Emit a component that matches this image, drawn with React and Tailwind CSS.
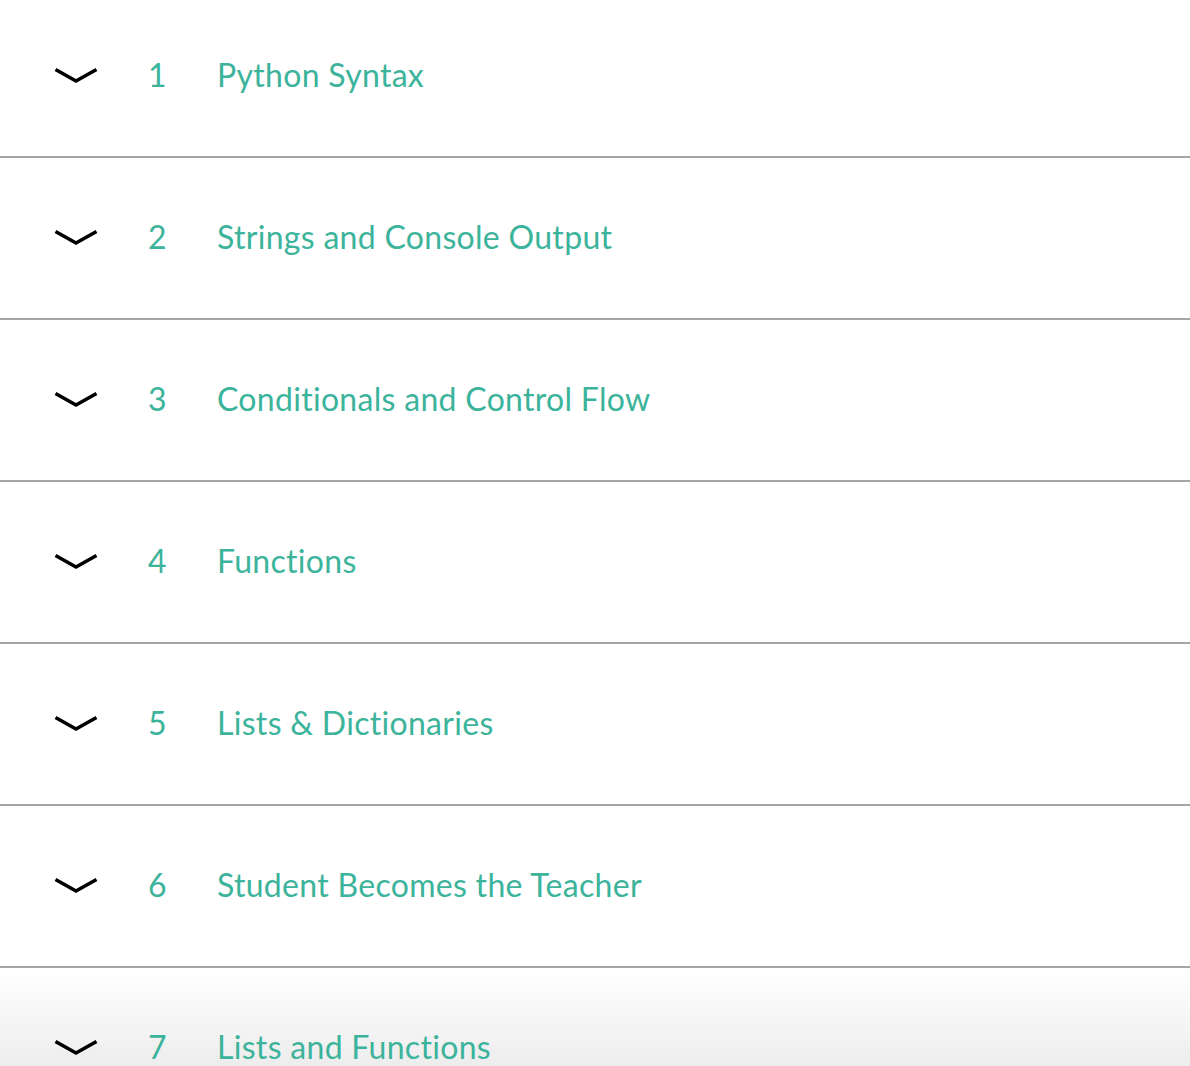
const lessons = [
  "Python Syntax",
  "Strings and Console Output",
  "Conditionals and Control Flow",
  "Functions",
  "Lists & Dictionaries",
  "Student Becomes the Teacher",
  "Lists and Functions",
]

function Chevron() {
  return (
    <svg width="44" height="18" viewBox="0 0 44 18" className="shrink-0">
      <path d="M1.5 2.5 L22 14 L42.5 2.5" fill="none" stroke="#000" strokeWidth="3.6" />
    </svg>
  )
}

export default function App() {
  return (
    <div className="h-[1066px] overflow-hidden bg-white font-['Lato',_'Open_Sans',_sans-serif] [font-variant-ligatures:none]">
      <ul className="-mt-[4px]">
        {lessons.map((title, i) => {
          const last = i === lessons.length - 1
          return (
            <li
              key={title}
              className={
                last
                  ? "flex h-[160px] items-center bg-[linear-gradient(to_bottom,#ffffff_4px,#ededed_97px)] pl-[54px]"
                  : "flex h-[162px] items-center border-b-2 border-[#a5a5a8] pl-[54px]"
              }
            >
              <Chevron />
              <span className="ml-[50px] w-[69px] pb-[3px] text-[32px] leading-none text-[#3cb39b]">{i + 1}</span>
              <span className="pb-[3px] text-[32px] leading-none tracking-[0.3px] text-[#3cb39b]">{title}</span>
            </li>
          )
        })}
      </ul>
    </div>
  )
}
